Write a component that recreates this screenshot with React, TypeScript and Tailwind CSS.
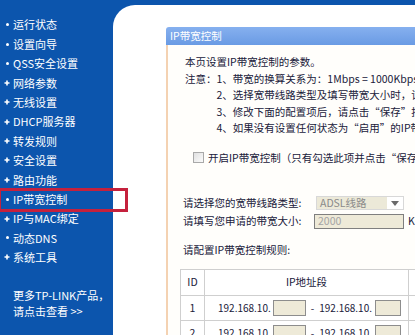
const menu: [string, string][] = [
  ["dot", "运行状态"],
  ["dot", "设置向导"],
  ["dot", "QSS安全设置"],
  ["plus", "网络参数"],
  ["plus", "无线设置"],
  ["plus", "DHCP服务器"],
  ["plus", "转发规则"],
  ["plus", "安全设置"],
  ["plus", "路由功能"],
  ["dot", "IP带宽控制"],
  ["plus", "IP与MAC绑定"],
  ["dot", "动态DNS"],
  ["plus", "系统工具"],
];

const font = { fontFamily: '"Noto Sans CJK SC", "Liberation Sans", sans-serif' };

function Bullet({ kind }: { kind: string }) {
  if (kind === "dot") return <span className="block h-[3px] w-[3px] rounded-full bg-white" />;
  return (
    <svg width="6" height="6" viewBox="0 0 6 6" className="block">
      <path d="M3 0.5v5M0.5 3h5" stroke="white" strokeWidth="1.6" />
    </svg>
  );
}

function IpBox({ w }: { w: string }) {
  return <span className={`block h-[16px] shrink-0 border border-[#8d8d8d] bg-[#eeead8] ${w}`} />;
}

function RuleRow({ id }: { id: number }) {
  return (
    <div className="flex h-[25px] border-b border-[#cfcfcf]">
      <div className="flex w-[24px] items-center justify-center border-r border-[#cfcfcf]">{id}</div>
      <div className="flex w-[204px] items-center whitespace-nowrap border-r border-[#cfcfcf] pl-[13px] text-[10px]">
        <span>192.168.10.</span>
        <span className="ml-[2px]"><IpBox w="w-[33px]" /></span>
        <span className="mx-[5px]">-</span>
        <span>192.168.10.</span>
        <span className="ml-[3px]"><IpBox w="w-[26px]" /></span>
      </div>
      <div className="w-[120px]" />
    </div>
  );
}

export default function App() {
  return (
    <div className="relative flex h-[335px] w-[415px] overflow-hidden bg-[#0c55ad] text-[10.5px] text-[#20203a]" style={font}>
      <aside className="flex w-[113px] shrink-0 flex-col pt-[15px] text-[11px] text-white">
        {menu.map(([kind, label]) => (
          <div key={label} className="flex h-[19.4px] items-center whitespace-nowrap">
            <span className="flex w-[13px] justify-center pl-[1px]">
              <Bullet kind={kind} />
            </span>
            <span>{label}</span>
          </div>
        ))}
        <div className="mt-[20px] pl-[13px] leading-[16px]">
          <div className="whitespace-nowrap">更多TP-LINK产品，</div>
          <div className="whitespace-nowrap">请点击查看 &gt;&gt;</div>
        </div>
      </aside>

      <main className="mt-[5px] flex-1 rounded-tl-[22px] bg-white pl-[53px] pt-[22px]">
        <div className="w-[400px]">
          <div className="flex h-[18px] items-center rounded-tl-[3px] bg-gradient-to-b from-[#86b0ef] to-[#6a9be4] pl-[4px] text-white">
            IP带宽控制
          </div>
          <div className="h-[300px] border-l-2 border-[#f4d2b2] bg-[#fffefb] pl-[12px] pt-[9px]">
            <div className="pl-[5px] leading-[16.5px]">
              <div className="whitespace-nowrap">本页设置IP带宽控制的参数。</div>
              <div className="flex whitespace-nowrap">
                <span className="shrink-0">注意：</span>
                <div>
                  <div>1、带宽的换算关系为：1Mbps = 1000Kbps；</div>
                  <div>2、选择宽带线路类型及填写带宽大小时，请根据实际情况进行选择和填写；</div>
                  <div>3、修改下面的配置项后，请点击“保存”按钮，使配置项生效；</div>
                  <div>4、如果没有设置任何状态为“启用”的IP带宽控制规则，则带宽控制不生效。</div>
                </div>
              </div>
            </div>

            <div className="mt-[13px] flex h-[16.5px] items-center whitespace-nowrap pl-[13px]">
              <span className="mr-[4px] block h-[11px] w-[11px] shrink-0 border border-[#a9a9a9] bg-gradient-to-br from-[#e0e0e0] to-[#fbfbfb]" />
              <span>开启IP带宽控制（只有勾选此项并点击“保存”后，IP带宽控制的设置才能生效）</span>
            </div>

            <div className="mt-[28px] pl-[3px]">
              <div className="flex h-[18px] items-center whitespace-nowrap">
                <span className="w-[133px] shrink-0">请选择您的宽带线路类型:</span>
                <div className="flex h-[14px] w-[88px] shrink-0 items-center border border-[#d8d8d8] bg-white">
                  <span className="flex h-full flex-1 items-center bg-[#ece9d8] pl-[3px] text-[#8a8a8a]">ADSL线路</span>
                  <span className="flex w-[16px] justify-center">
                    <svg width="8" height="5" viewBox="0 0 8 5">
                      <path d="M0 0h8L4 5z" fill="#6a6a6a" />
                    </svg>
                  </span>
                </div>
              </div>
              <div className="flex h-[18px] items-center whitespace-nowrap">
                <span className="w-[131px] shrink-0">请填写您申请的带宽大小:</span>
                <span className="flex h-[15px] w-[90px] shrink-0 items-center border border-[#7f7f7f] bg-[#eeead8] pl-[3px] text-[#a4a4a4]">2000</span>
                <span className="ml-[4px]">Kbps</span>
              </div>
            </div>

            <div className="mt-[12px] whitespace-nowrap pl-[3px] leading-[16.5px]">请配置IP带宽控制规则:</div>

            <div className="mt-[10px] w-[360px] border-l border-t border-[#cfcfcf] bg-white">
              <div className="flex h-[26px] border-b border-[#cfcfcf]">
                <div className="flex w-[24px] items-center justify-center border-r border-[#cfcfcf]">ID</div>
                <div className="flex w-[204px] items-center justify-center border-r border-[#cfcfcf]">IP地址段</div>
                <div className="flex w-[120px] items-center justify-center">端口段</div>
              </div>
              <RuleRow id={1} />
              <RuleRow id={2} />
            </div>
          </div>
        </div>
      </main>

      <div className="absolute left-[-2px] top-[188px] h-[24px] w-[130px] border-[3px] border-[#c5213d]" />
    </div>
  );
}
